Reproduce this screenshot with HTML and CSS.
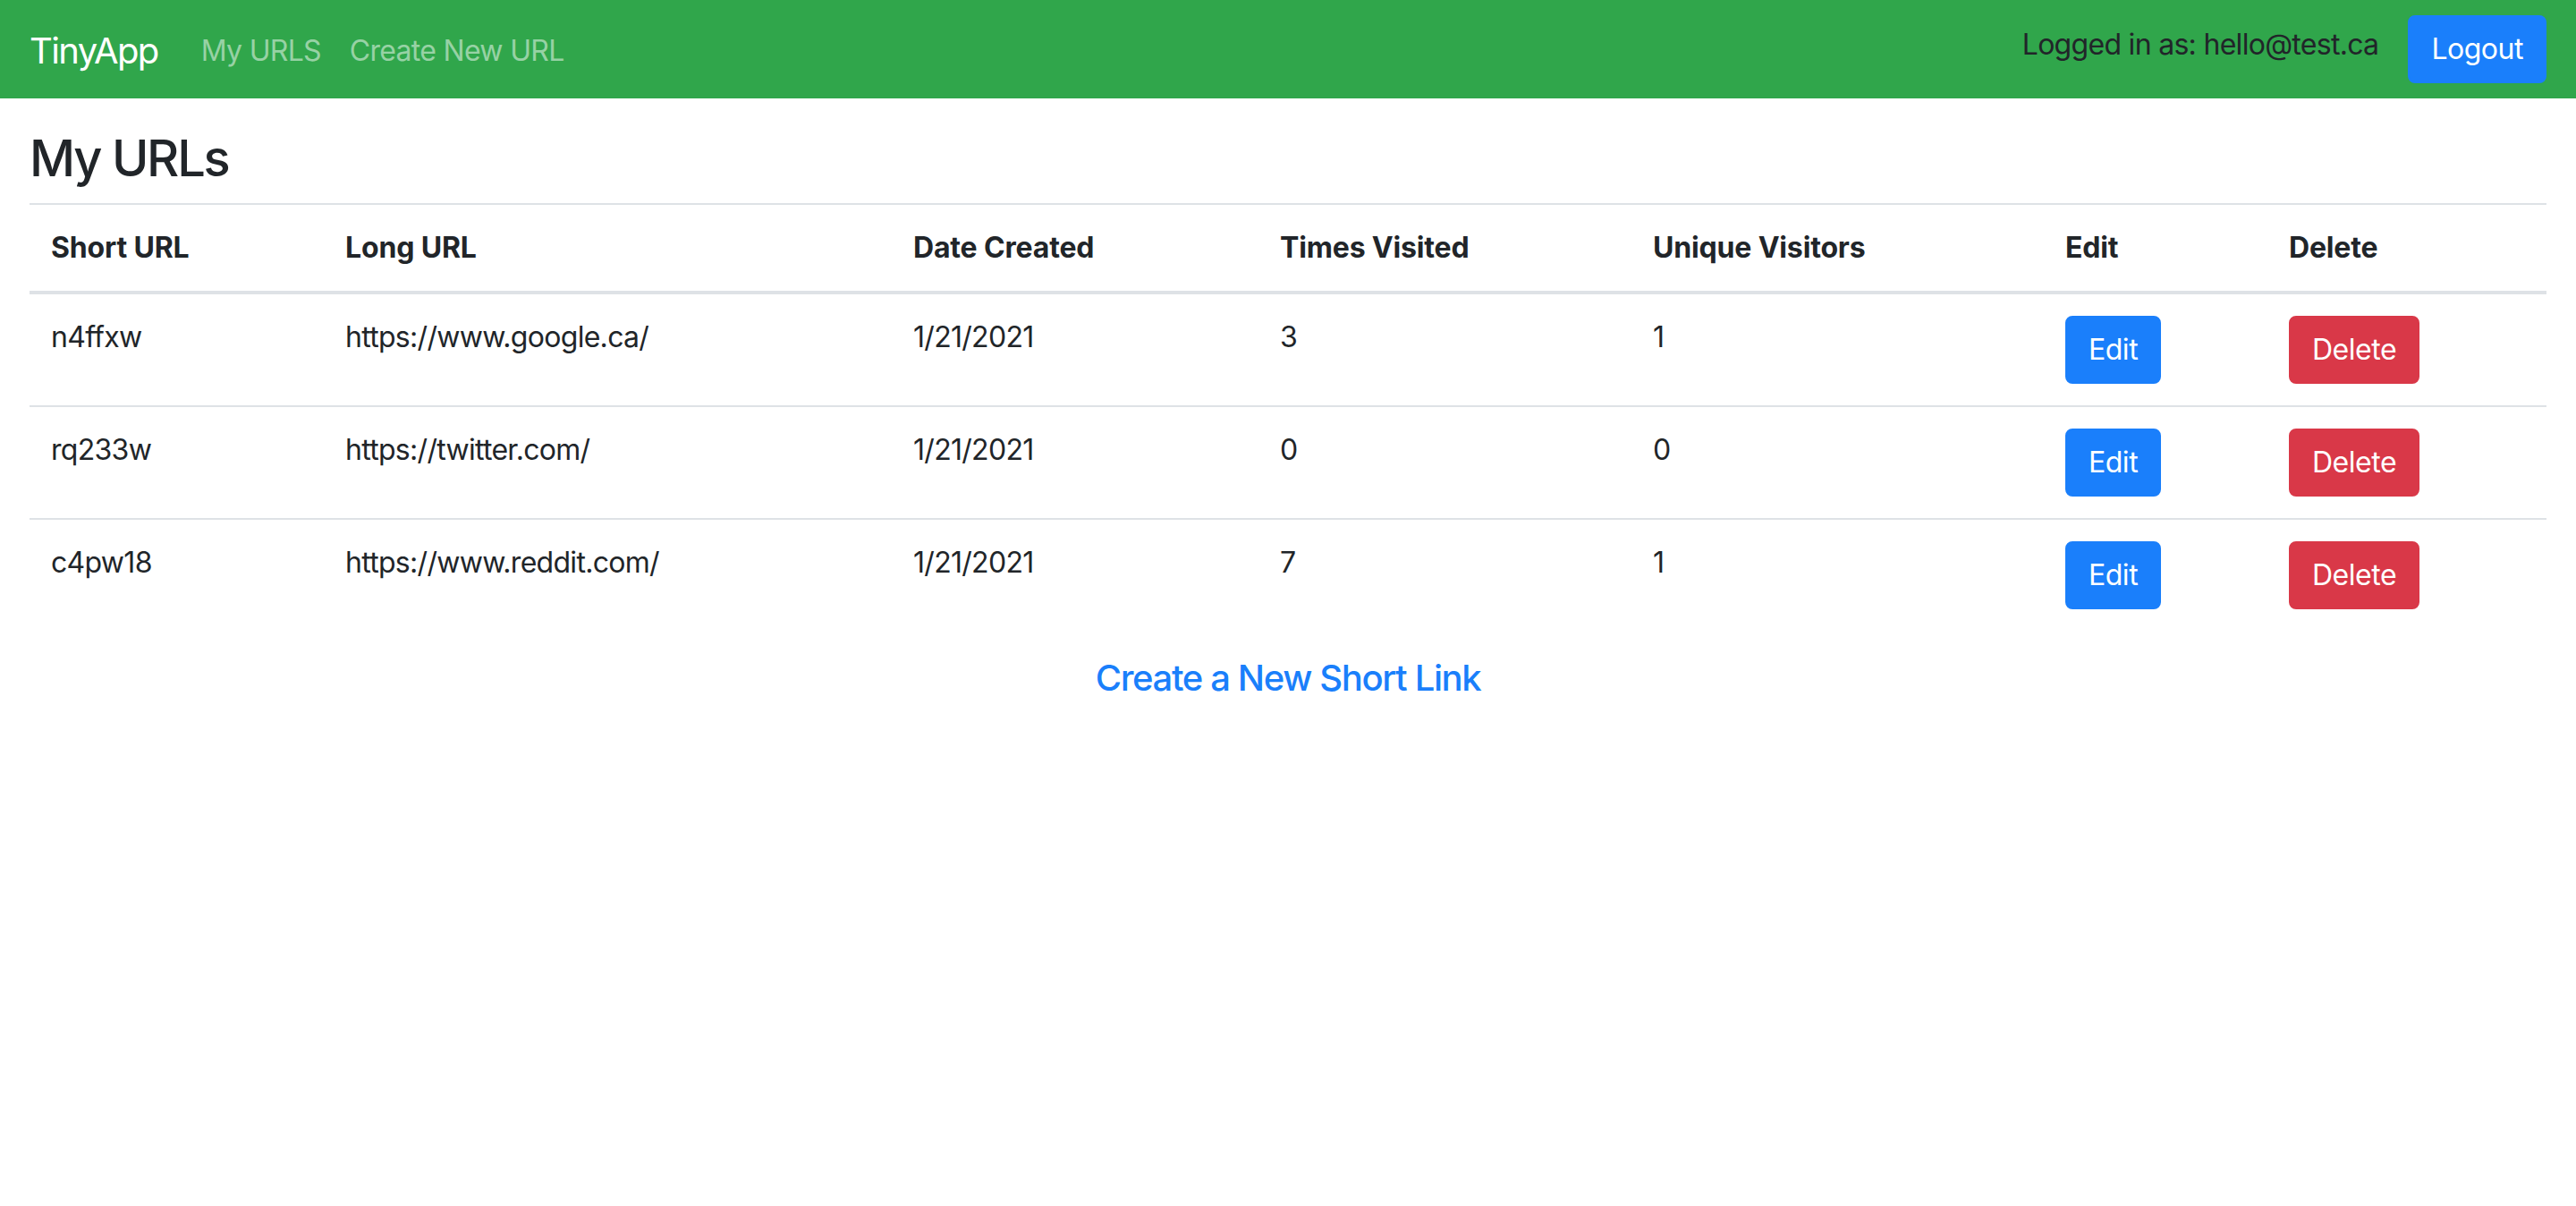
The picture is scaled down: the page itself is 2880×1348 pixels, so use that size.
FILE: index.html
```html
<!DOCTYPE html>
<html lang="en">
<head>
<meta charset="utf-8">
<title>TinyApp</title>
<link rel="stylesheet" href="styles.css">
</head>
<body>
<nav class="navbar">
  <a class="brand" href="#">TinyApp</a>
  <div class="nav-links">
    <a class="nav-link" href="#">My URLS</a>
    <a class="nav-link" href="#">Create New URL</a>
  </div>
  <div class="nav-right">
    <span class="logged">Logged in as: hello@test.ca</span>
    <button class="btn btn-primary">Logout</button>
  </div>
</nav>
<main class="content">
  <h3 class="title">My URLs</h3>
  <table class="table">
    <thead>
      <tr>
        <th class="c1">Short URL</th>
        <th class="c2">Long URL</th>
        <th class="c3">Date Created</th>
        <th class="c4">Times Visited</th>
        <th class="c5">Unique Visitors</th>
        <th class="c6">Edit</th>
        <th class="c7">Delete</th>
      </tr>
    </thead>
    <tbody>
      <tr>
        <td>n4ffxw</td>
        <td>https://www.google.ca/</td>
        <td>1/21/2021</td>
        <td>3</td>
        <td>1</td>
        <td><button class="btn btn-primary">Edit</button></td>
        <td><button class="btn btn-danger">Delete</button></td>
      </tr>
      <tr>
        <td>rq233w</td>
        <td>https://twitter.com/</td>
        <td>1/21/2021</td>
        <td>0</td>
        <td>0</td>
        <td><button class="btn btn-primary">Edit</button></td>
        <td><button class="btn btn-danger">Delete</button></td>
      </tr>
      <tr>
        <td>c4pw18</td>
        <td>https://www.reddit.com/</td>
        <td>1/21/2021</td>
        <td>7</td>
        <td>1</td>
        <td><button class="btn btn-primary">Edit</button></td>
        <td><button class="btn btn-danger">Delete</button></td>
      </tr>
    </tbody>
  </table>
  <div class="create">
    <a class="create-link" href="#">Create a New Short Link</a>
  </div>
</main>
</body>
</html>
```
FILE: styles.css
```css
* { box-sizing: border-box; }
html, body {
  margin: 0;
  padding: 0;
  background: #ffffff;
}
body {
  font-family: Inter, "Noto Sans", "Liberation Sans", sans-serif;
  font-size: 32px;
  line-height: 1.5;
  color: #212529;
  letter-spacing: -0.022em;
}
a { text-decoration: none; }

.navbar {
  display: flex;
  align-items: center;
  height: 110px;
  padding: 0 33px;
  background: #30a64b;
}
.brand {
  font-size: 40px;
  line-height: 60px;
  color: #ffffff;
  margin-right: 32px;
  margin-top: 3px;
  letter-spacing: -0.04em;
}
.nav-links {
  display: flex;
  flex: 1;
  margin-top: 3px;
}
.nav-link {
  padding: 0 16px;
  color: rgba(255, 255, 255, 0.5);
  line-height: 48px;
}
.nav-right {
  display: flex;
  align-items: center;
}
.logged {
  color: #212529;
  margin-right: 33px;
  margin-bottom: 10px;
}
.btn {
  font-family: inherit;
  font-size: 32px;
  line-height: 48px;
  padding: 12px 24px;
  border: 2px solid transparent;
  border-radius: 8px;
  color: #ffffff;
  letter-spacing: -0.015em;
  cursor: pointer;
}
.btn-primary { background: #1a7ffb; border-color: #1a7ffb; }
.btn-danger { background: #d93848; border-color: #d93848; }

.content {
  padding: 0 33px;
}
.title {
  font-size: 56px;
  font-weight: 500;
  line-height: 1.2;
  margin: 34px 0 16px;
  letter-spacing: -0.04em;
}
.table {
  width: 100%;
  border-collapse: collapse;
  table-layout: fixed;
}
.table th, .table td {
  text-align: left;
  vertical-align: top;
  padding: 24px;
  border-top: 2px solid #dee2e6;
}
.table th {
  font-weight: 700;
  border-bottom: 4px solid #dee2e6;
  letter-spacing: -0.005em;
}
.c1 { width: 329px; }
.c2 { width: 635px; }
.c3 { width: 410px; }
.c4 { width: 417px; }
.c5 { width: 461px; }
.c6 { width: 250px; }
.c7 { width: 312px; }

.create {
  text-align: center;
  margin-top: 29px;
}
.create-link {
  font-size: 40px;
  font-weight: 500;
  line-height: 1.2;
  color: #1a7ffb;
  letter-spacing: -0.034em;
}
```
